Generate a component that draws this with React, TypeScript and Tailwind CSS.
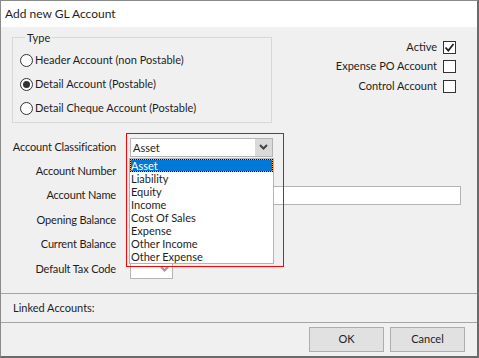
import { type ReactNode } from "react";

const classifications = [
  "Asset",
  "Liability",
  "Equity",
  "Income",
  "Cost Of Sales",
  "Expense",
  "Other Income",
  "Other Expense",
];

const Chevron = ({ className }: { className?: string }) => (
  <svg
    width="9"
    height="6"
    viewBox="0 0 9 6"
    className={className}
  >
    <path
      d="M1 1l3.5 3.5L8 1"
      fill="none"
      stroke="currentColor"
      strokeWidth="2"
    />
  </svg>
);

const Radio = ({
  label,
  checked,
}: {
  label: string;
  checked?: boolean;
}) => (
  <label className="flex h-6 items-center gap-[2px]">
    <span className="flex h-[13px] w-[13px] items-center justify-center rounded-full border border-[#333] bg-white">
      {checked && (
        <span className="h-[7px] w-[7px] rounded-full bg-[#333]" />
      )}
    </span>
    {label}
  </label>
);

const Check = ({
  label,
  checked,
  height,
}: {
  label: string;
  checked?: boolean;
  height: string;
}) => (
  <div
    className={`flex items-center justify-end gap-[6px] ${height}`}
  >
    <span>{label}</span>
    <span className="flex h-[13px] w-[13px] items-center justify-center border border-[#333] bg-white">
      {checked && (
        <svg width="11" height="11" viewBox="0 0 11 11">
          <path
            d="M1.5 5.5l2.8 3L9.5 2"
            fill="none"
            stroke="#222"
            strokeWidth="1.8"
          />
        </svg>
      )}
    </span>
  </div>
);

const Row = ({
  label,
  height,
  children,
}: {
  label: string;
  height: string;
  children: ReactNode;
}) => (
  <div className={`flex items-center ${height}`}>
    <span className="w-[115px] text-right tracking-[-0.15px]">
      {label}
    </span>
    <div className="ml-[14px] flex">
      {children}
    </div>
  </div>
);

const App = () => {
  return (
    <div className="flex h-[358px] w-[479px] flex-col border-t border-l border-r-2 border-b-2 border-t-[#8a8a8a] border-l-[#8a8a8a] border-r-[#6a6a6a] border-b-[#6a6a6a] font-['Lato',sans-serif] text-[11px] text-[#1e1e1e]">
      {/* Title bar */}

      <div className="flex h-[26px] items-center bg-white pl-[4px] text-[12px]">
        Add new GL Account
      </div>

      <div className="flex flex-1 flex-col bg-[#f0f0f0]">
        {/* Form */}

        <div className="flex-1">
          <div className="flex items-start">
            <fieldset className="ml-[11px] mt-[3px] h-[93px] w-[260px] border border-[#d8d8d8] pl-[7px]">
              <legend className="ml-[5px] px-[2px] leading-[15px]">
                Type
              </legend>

              <div className="pt-[3px]">
                <Radio label="Header Account (non Postable)" />
                <Radio
                  label="Detail Account (Postable)"
                  checked
                />
                <Radio label="Detail Cheque Account (Postable)" />
              </div>
            </fieldset>

            <div className="ml-auto mr-[21px] mt-[10px]">
              <Check label="Active" checked height="h-[20px]" />
              <Check label="Expense PO Account" height="h-[19px]" />
              <Check label="Control Account" height="h-[20px]" />
            </div>
          </div>

          <div className="mt-[12px]">
            <Row label="Account Classification" height="h-[24px]">
              <div className="relative">
                <div className="flex h-[19px] w-[143px] border border-[#b4b4b4] bg-white">
                  <span className="flex-1 pl-[2px] leading-[17px]">
                    Asset
                  </span>
                  <span className="flex w-[17px] items-center justify-center bg-[#dadada] text-[#444]">
                    <Chevron />
                  </span>
                </div>

                {/* Open dropdown list */}

                <div className="absolute -left-[1px] top-[20px] w-[145px] border border-[#b4b4b4] bg-white">
                  {classifications.map((item, index) =>
                    index === 0 ? (
                      <div
                        key={item}
                        className="bg-[#f4a04a]"
                      >
                        <div className="h-[13px] border border-dotted border-black bg-[#0078d7] bg-clip-padding leading-[11px] text-white">
                          {item}
                        </div>
                      </div>
                    ) : (
                      <div
                        key={item}
                        className="h-[13px] pl-[1px] leading-[13px]"
                      >
                        {item}
                      </div>
                    )
                  )}
                </div>

                <div className="pointer-events-none absolute -left-[4px] -top-[5px] h-[134px] w-[158px] border border-[#ff0000]" />
              </div>
            </Row>

            <Row label="Account Number" height="h-[24px]">
              <div className="h-[19px] w-[120px] border border-[#b4b4b4] bg-white" />
            </Row>

            <Row label="Account Name" height="h-[25px]">
              <div className="h-[19px] w-[331px] border border-[#b4b4b4] bg-white" />
            </Row>

            <Row label="Opening Balance" height="h-[24px]">
              <div className="h-[19px] w-[100px] border border-[#b4b4b4] bg-white" />
            </Row>

            <Row label="Current Balance" height="h-[25px]">
              <div className="h-[19px] w-[100px] border border-[#b4b4b4] bg-white" />
            </Row>

            <Row label="Default Tax Code" height="h-[24px]">
              <div className="flex h-[19px] w-[43px] items-center justify-end border border-[#b4b4b4] bg-white pr-[3px] text-[#9a9a9a]">
                <Chevron />
              </div>
            </Row>
          </div>
        </div>

        {/* Linked accounts */}

        <div className="flex h-[29px] items-center border-t border-[#a5a5a5] pl-[12px]">
          Linked Accounts:
        </div>

        {/* Buttons */}

        <div className="flex h-[34px] justify-end gap-[6px] border-t border-[#a5a5a5] pr-[12px] pt-[4px]">
          <button className="h-[25px] w-[75px] border border-[#adadad] bg-[#e1e1e1]">
            OK
          </button>

          <button className="h-[25px] w-[75px] border border-[#adadad] bg-[#e1e1e1]">
            Cancel
          </button>
        </div>
      </div>
    </div>
  );
};

export default App;
